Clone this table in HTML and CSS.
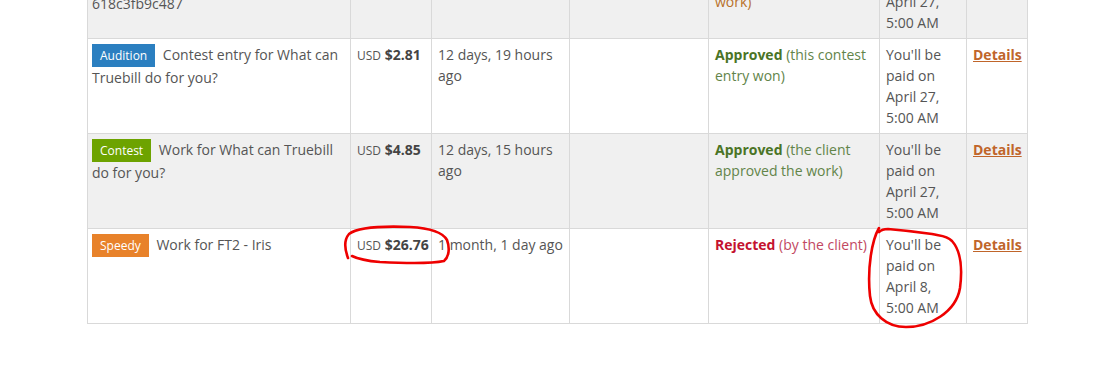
FILE: index.html
```html
<!DOCTYPE html>
<html>
<head>
<meta charset="utf-8">
<link rel="stylesheet" href="styles.css">
</head>
<body>
<div class="page">
  <table class="earnings">
    <colgroup>
      <col class="c-item"><col class="c-amount"><col class="c-date"><col class="c-empty"><col class="c-status"><col class="c-payout"><col class="c-link">
    </colgroup>
    <tbody>
      <tr class="alt">
        <td class="item"><span class="badge contest">Contest</span> Work for Landing page design for the client project<br>618c3fb9c487</td>
        <td class="price"><span class="cur">USD</span> <b class="amt">$12.40</b></td>
        <td>13 days ago</td>
        <td></td>
        <td class="pending"><b>Pending</b> (the client hasn't reviewed the work)</td>
        <td>You'll be paid on April 27, 5:00 AM</td>
        <td><a class="details" href="#">Details</a></td>
      </tr>
      <tr>
        <td class="item"><span class="badge audition">Audition</span> Contest entry for What can Truebill do for you?</td>
        <td class="price"><span class="cur">USD</span> <b class="amt">$2.81</b></td>
        <td>12 days, 19 hours ago</td>
        <td></td>
        <td class="approved"><b>Approved</b> (this contest entry won)</td>
        <td>You'll be paid on April 27, 5:00 AM</td>
        <td><a class="details" href="#">Details</a></td>
      </tr>
      <tr class="alt">
        <td class="item"><span class="badge contest">Contest</span> Work for What can Truebill do for you?</td>
        <td class="price"><span class="cur">USD</span> <b class="amt">$4.85</b></td>
        <td>12 days, 15 hours ago</td>
        <td></td>
        <td class="approved"><b>Approved</b> (the client approved the work)</td>
        <td>You'll be paid on April 27, 5:00 AM</td>
        <td><a class="details" href="#">Details</a></td>
      </tr>
      <tr>
        <td class="item"><span class="badge speedy">Speedy</span> Work for FT2 - Iris</td>
        <td class="price"><span class="cur">USD</span> <b class="amt">$26.76</b></td>
        <td>1 month, 1 day ago</td>
        <td></td>
        <td class="rejected"><b>Rejected</b> (by the client)</td>
        <td>You'll be paid on April 8, 5:00 AM</td>
        <td><a class="details" href="#">Details</a></td>
      </tr>
    </tbody>
  </table>
</div>
<svg class="marks" width="1102" height="375" viewBox="0 0 1102 375" xmlns="http://www.w3.org/2000/svg">
  <path d="M348,258 C345,250 343,241 349,234 C358,227 385,226 410,227 C428,228 442,231 447,240 C450,248 449,257 444,261 C430,264 400,263 380,262 C368,261 358,259 352,256" fill="none" stroke="#ee0000" stroke-width="2.6" stroke-linecap="round" stroke-linejoin="round"/>
  <path d="M879,228 C872,240 867,268 870,296 C872,314 886,327 906,327 C930,327 956,312 960,288 C963,265 960,250 952,241 C946,235 940,236 932,234 C918,232 900,230 888,229 C884,229 881,230 879,232" fill="none" stroke="#ee0000" stroke-width="2.6" stroke-linecap="round" stroke-linejoin="round"/>
</svg>
</body>
</html>
```

FILE: styles.css
```css
html, body {
  margin: 0;
  padding: 0;
  background: #ffffff;
}

body {
  font-family: "Open Sans", "DejaVu Sans", sans-serif;
  font-size: 14px;
  line-height: 21px;
  color: #555555;
  position: relative;
  width: 1102px;
  height: 375px;
  overflow: hidden;
}

.page {
  padding-left: 87px;
}

.earnings {
  margin-top: -57px;
  border-collapse: collapse;
  table-layout: fixed;
  width: 940px;
}

.c-item { width: 263px; }
.c-amount { width: 81px; }
.c-date { width: 138px; }
.c-empty { width: 139px; }
.c-status { width: 171px; }
.c-payout { width: 87px; }
.c-link { width: 61px; }

.earnings td {
  border: 1px solid #d9d9d9;
  padding: 5px 6px;
  vertical-align: top;
  text-align: left;
}

.earnings td.item {
  padding-left: 4px;
}

.earnings td.price {
  white-space: nowrap;
  padding-right: 2px;
}

.earnings tr.alt td {
  background: #f0f0f0;
}

.badge {
  display: inline-block;
  font-size: 12px;
  line-height: 17px;
  padding: 3px 8px;
  color: #ffffff;
  margin-right: 4px;
  vertical-align: top;
}

.badge.audition { background: #2b7fc0; }
.badge.contest { background: #6da300; }
.badge.speedy { background: #e8822a; }

.cur {
  font-size: 12px;
  color: #555555;
}

.amt {
  font-weight: 700;
  color: #444444;
}

.approved { color: #628449; }
.approved b { color: #4a7426; }

.rejected { color: #c24862; }
.rejected b { color: #c4122f; }

.pending { color: #b8702a; }
.pending b { color: #b0641c; }

.details {
  color: #c0652a;
  font-weight: 700;
  text-decoration: underline;
}

.marks {
  position: absolute;
  top: 0;
  left: 0;
  pointer-events: none;
}
```
